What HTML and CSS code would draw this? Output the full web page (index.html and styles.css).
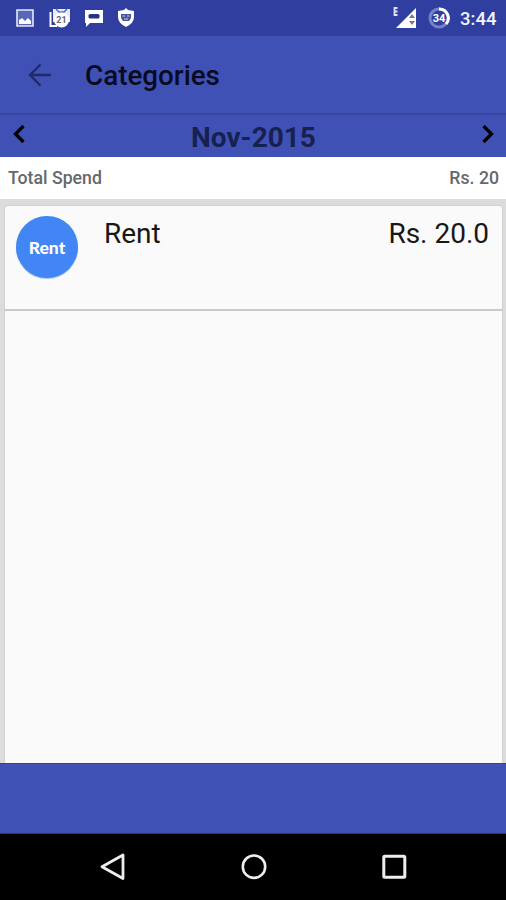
FILE: index.html
```html
<!DOCTYPE html>
<html lang="en">
<head>
<meta charset="utf-8">
<title>Categories</title>
<link rel="stylesheet" href="styles.css">
</head>
<body>
<div class="screen">
  <div class="status">
    <div class="notifications">
      <svg width="18" height="18" viewBox="0 0 18 18"><path d="M1 1H17V17H1Z" fill="#5968b6" stroke="#e4e8fa" stroke-width="1.6"/><path d="M3 15V11L6 9L9 12L12 9L15 12V15Z" fill="#fff"/></svg>
      <svg width="22" height="20" viewBox="0 0 22 20"><path d="M1.500 4V18H8" fill="none" stroke="#fff" stroke-width="2"/><path d="M4 1H21V14H4Z" fill="#e8ebfa"/><path d="M7 1L10 4H15L18 1" fill="none" stroke="#5968b6" stroke-width="1.500"/><circle cx="12.500" cy="12" r="7.500" fill="#fff"/><text class="calendar-day" x="12.500" y="15" text-anchor="middle">21</text></svg>
      <svg width="20" height="19" viewBox="0 0 20 19"><path fill="#fff" d="M1 1H19V14H6L2 18V14H1Z"/><rect x="4.500" y="5" width="11" height="4.500" rx="1.500" fill="#26357f"/></svg>
      <svg width="18" height="20" viewBox="0 0 18 20"><path fill="#fff" d="M9 0L11 2L17 3V9Q17 15 9 19Q1 15 1 9V3L7 2Z"/><path fill="#46559c" d="M4 6H14V10L12 13H6L4 10Z"/><path d="M5.500 8H8M10 8H12.500M7 11H11" stroke="#cbd1ec" stroke-width="1"/></svg>
    </div>
    <div class="system">
      <svg width="24" height="24" viewBox="0 0 24 24"><path d="M5.500 2H2.500V9H5.500M2.500 5.500H5.500" fill="none" stroke="#dce1f8" stroke-width="1.800"/><path d="M24 2V22H4Z" fill="#fff"/><path d="M20 8L23 12H17ZM17 15H23L20 19Z" fill="#777b80"/></svg>
      <svg width="22" height="22" viewBox="0 0 22 22"><circle cx="11" cy="11" r="9" fill="none" stroke="#7582c6" stroke-width="3"/><path d="M11 2A9 9 0 0 1 18 17" fill="none" stroke="#fff" stroke-width="3"/><text class="battery-level" x="11" y="15" text-anchor="middle">34</text></svg>
      <span class="clock">3:44</span>
    </div>
  </div>
  <header class="appbar">
    <svg width="24" height="24" viewBox="0 0 24 24"><path d="M12.500 1.500L2 12L12.500 22.500M2 12H23" fill="none" stroke="#1f2a68" stroke-width="2.300"/></svg>
    <h1 class="title">Categories</h1>
  </header>
  <div class="month">
    <svg width="14" height="20" viewBox="0 0 14 20"><path d="M11.500 2L3.500 10L11.500 18" fill="none" stroke="#000" stroke-width="3.300"/></svg>
    <span class="month-name">Nov-2015</span>
    <svg width="14" height="20" viewBox="0 0 14 20"><path d="M2.500 2L10.500 10L2.500 18" fill="none" stroke="#000" stroke-width="3.300"/></svg>
  </div>
  <div class="total"><span>Total Spend</span><span>Rs. 20</span></div>
  <main class="content">
    <div class="list">
      <div class="item">
        <div class="avatar">Rent</div>
        <span class="name">Rent</span>
        <span class="amount">Rs. 20.0</span>
      </div>
    </div>
  </main>
  <div class="bottom"></div>
  <nav class="nav">
    <svg width="28" height="30" viewBox="0 0 28 30"><path d="M24 3V26.500L3 14.750Z" fill="none" stroke="#eee" stroke-width="2.800" stroke-linejoin="round"/></svg>
    <svg width="28" height="30" viewBox="0 0 28 30"><circle cx="14" cy="14.700" r="11.200" fill="none" stroke="#eee" stroke-width="2.600"/></svg>
    <svg width="28" height="30" viewBox="0 0 28 30"><rect x="3.800" y="4.300" width="21" height="21" rx="1" fill="none" stroke="#eee" stroke-width="3"/></svg>
  </nav>
</div>
</body>
</html>
```
FILE: styles.css
```css
* { box-sizing: border-box; }
body { margin: 0; font-family: Roboto, "Liberation Sans", sans-serif; }
svg { display: block; flex: none; }
.screen { width: 506px; height: 900px; display: flex; flex-direction: column; overflow: hidden; background: #3f51b5; }
.status { height: 36px; flex: none; background: #303f9f; display: flex; align-items: center; justify-content: space-between; padding: 0 10px 0 16px; }
.notifications { display: flex; align-items: center; gap: 13px; }
.notifications svg:first-child { margin-right: 2px; }
.calendar-day { font-size: 9px; font-weight: 700; fill: #65686f; }
.system { display: flex; align-items: center; }
.system svg:first-child { margin-right: 12px; }
.battery-level { font-size: 11px; font-weight: 700; fill: #fff; }
.clock { font-size: 18.5px; font-weight: 500; line-height: 36px; color: #f3f5ff; margin-left: 10px; margin-top: 1px; width: 36px; white-space: nowrap; }
.appbar { height: 79px; flex: none; display: flex; align-items: center; padding-left: 28px; border-bottom: 2px solid #3747a1; }
.title { margin: 3px 0 0 33px; font-size: 27.8px; line-height: 36px; font-weight: 500; color: #080b20; }
.month { height: 42px; flex: none; display: flex; align-items: center; justify-content: space-between; padding: 0 11px 4px 12px; }
.month-name { font-size: 28px; line-height: 36px; font-weight: 700; color: #17214f; padding-top: 8px; }
.total { height: 42px; flex: none; display: flex; align-items: center; justify-content: space-between; padding: 0 7px 0 8px; background: #fff; color: #66686b; font-size: 17.7px; font-weight: 500; }
.content { height: 564px; flex: none; background: #dcdcdc; padding: 7px 4px 0 5px; }
.list { height: 557px; background: #fafafa; border-radius: 3px 3px 0 0; box-shadow: 0 0 2px #bbb; }
.item { height: 105px; display: flex; align-items: flex-start; border-bottom: 2px solid #c9c9c9; padding: 10px 13px 0 11px; }
.avatar { width: 62px; height: 62px; flex: none; border-radius: 50%; background: #4285f4; color: #fff; display: flex; align-items: center; justify-content: center; font: 900 17.5px Lato, sans-serif; box-shadow: 0 1px 1px #a9bfe6; }
.name, .amount { font-size: 28px; line-height: 36px; color: #181818; }
.name { margin-left: 26px; }
.amount { margin-left: auto; }
.bottom { height: 71px; flex: none; border-top: 1px solid #2f4299; border-bottom: 1px solid #29367f; }
.nav { height: 66px; flex: none; background: #000; display: flex; justify-content: space-between; padding: 18px 98px 0 99px; }
```
